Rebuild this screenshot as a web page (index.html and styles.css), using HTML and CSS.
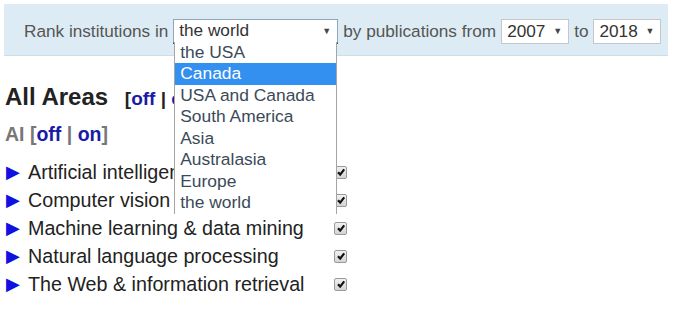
FILE: index.html
```html
<!DOCTYPE html>
<html lang="en">
<head>
    <meta charset="UTF-8">
    <meta name="viewport" content="width=device-width, initial-scale=1.0">
    <title>Rank institutions</title>
    <link rel="stylesheet" href="styles.css">
</head>
<body>
    <div class="toolbar">
        <span>Rank institutions in</span>
        <div class="select region">
            <span class="select-value">the world</span>
            <span class="select-arrow">&#9660;</span>
            <ul class="dropdown">
                <li>the USA</li>
                <li class="active">Canada</li>
                <li>USA and Canada</li>
                <li>South America</li>
                <li>Asia</li>
                <li>Australasia</li>
                <li>Europe</li>
                <li>the world</li>
            </ul>
        </div>
        <span>by publications from</span>
        <div class="select year">
            <span class="select-value">2007</span>
            <span class="select-arrow">&#9660;</span>
        </div>
        <span>to</span>
        <div class="select year">
            <span class="select-value">2018</span>
            <span class="select-arrow">&#9660;</span>
        </div>
    </div>

    <h1 class="areas-title">All Areas <span class="toggle">[<a>off</a> | <a>on</a>]</span></h1>
    <h2 class="group-title">AI <span class="toggle">[<a>off</a> | <a>on</a>]</span></h2>

    <div class="area-list">
        <div class="area-row">
            <span class="arrow">&#9654;</span>
            <span class="area-name">Artificial intelligence</span>
            <span class="check"><svg viewBox="0 0 10 10"><path d="M2 5.2 L4.2 7.6 L8.2 2.4" /></svg></span>
        </div>
        <div class="area-row">
            <span class="arrow">&#9654;</span>
            <span class="area-name">Computer vision</span>
            <span class="check"><svg viewBox="0 0 10 10"><path d="M2 5.2 L4.2 7.6 L8.2 2.4" /></svg></span>
        </div>
        <div class="area-row">
            <span class="arrow">&#9654;</span>
            <span class="area-name">Machine learning &amp; data mining</span>
            <span class="check"><svg viewBox="0 0 10 10"><path d="M2 5.2 L4.2 7.6 L8.2 2.4" /></svg></span>
        </div>
        <div class="area-row">
            <span class="arrow">&#9654;</span>
            <span class="area-name">Natural language processing</span>
            <span class="check"><svg viewBox="0 0 10 10"><path d="M2 5.2 L4.2 7.6 L8.2 2.4" /></svg></span>
        </div>
        <div class="area-row">
            <span class="arrow">&#9654;</span>
            <span class="area-name">The Web &amp; information retrieval</span>
            <span class="check"><svg viewBox="0 0 10 10"><path d="M2 5.2 L4.2 7.6 L8.2 2.4" /></svg></span>
        </div>
    </div>
</body>
</html>
```

FILE: styles.css
```css
body {
    margin: 0;
    padding: 4px 19px 0 4px;
    font-family: "Liberation Sans", Arial, sans-serif;
    color: #222;
    background: #fff;
    overflow: hidden;
}

.toolbar {
    display: flex;
    align-items: center;
    gap: 5px;
    height: 48px;
    padding: 3px 0 0 20px;
    background-color: #ddecf4;
    border-bottom: 1px solid #c9dfea;
    font-size: 17.2px;
    color: #555;
}

.select {
    position: relative;
    display: flex;
    align-items: center;
    justify-content: space-between;
    height: 23px;
    padding: 0 6px 0 5px;
    background: #fff;
    border: 1px solid #c4c8cc;
    color: #333;
    font-size: 17.2px;
}

.region {
    width: 152px;
    border-color: #8fa6c0;
    border-bottom: 2px solid #222;
    height: 22px;
}

.year {
    width: 55px;
}

.select-arrow {
    font-size: 9px;
    color: #444;
}

.dropdown {
    position: absolute;
    top: 22px;
    left: 0;
    width: 161px;
    margin: 0;
    padding: 0;
    list-style: none;
    background: #fff;
    border-left: 1px solid #a5a5a5;
    border-right: 1px solid #a5a5a5;
    z-index: 2;
}

.dropdown li {
    height: 21.5px;
    line-height: 21px;
    padding-left: 5px;
    font-size: 17.4px;
    color: #3b4a58;
}

.dropdown li.active {
    background-color: #3390f0;
    color: #fff;
}

.areas-title {
    margin: 27px 0 0 1px;
    font-size: 24px;
    line-height: 28px;
    font-weight: bold;
    color: #222;
}

.areas-title .toggle {
    margin-left: 10px;
    font-size: 19px;
}

.toggle a {
    color: #1a1aa6;
}

.group-title {
    margin: 9px 0 0 1px;
    font-size: 19.5px;
    line-height: 24px;
    font-weight: bold;
    color: #777;
}

.area-list {
    margin-top: 12px;
    width: 343px;
}

.area-row {
    display: flex;
    align-items: center;
    height: 28px;
    font-size: 19.7px;
    color: #222;
}

.arrow {
    width: 22px;
    margin-left: 2px;
    font-size: 18px;
    color: #1010e0;
}

.area-name {
    flex: 1;
}

.check {
    display: flex;
    align-items: center;
    justify-content: center;
    width: 11px;
    height: 11px;
    border: 1px solid #9a9a9a;
    border-radius: 2px;
    background: linear-gradient(#f0f0f0, #d4d4d4);
}

.check svg {
    width: 10px;
    height: 10px;
}

.check path {
    fill: none;
    stroke: #111;
    stroke-width: 2.2;
}
```
